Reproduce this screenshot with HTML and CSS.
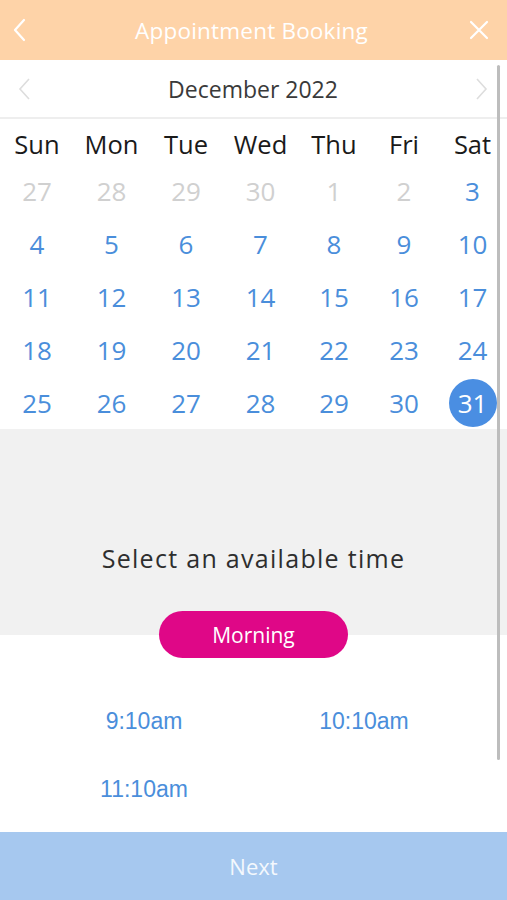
FILE: index.html
```html
<!DOCTYPE html>
<html lang="en">
<head>
    <meta charset="UTF-8">
    <meta name="viewport" content="width=device-width, initial-scale=1.0">
    <title>Appointment Booking</title>
    <link rel="stylesheet" href="styles.css">
</head>
<body>
    <div class="header">
        <svg class="hicon" width="20" height="26" viewBox="0 0 20 26"><path d="M14 3 L5 13 L14 23" fill="none" stroke="#fff" stroke-width="2.2" stroke-linecap="round" stroke-linejoin="round"/></svg>
        <h1 class="title">Appointment Booking</h1>
        <svg class="hicon" width="24" height="24" viewBox="0 0 24 24"><path d="M4 4 L20 20 M20 4 L4 20" fill="none" stroke="#fff" stroke-width="2.2" stroke-linecap="round"/></svg>
    </div>

    <div class="month">
        <svg width="16" height="24" viewBox="0 0 16 24"><path d="M12 2 L3 12 L12 22" fill="none" stroke="#ddd" stroke-width="1.6"/></svg>
        <span class="month-name">December 2022</span>
        <svg width="16" height="24" viewBox="0 0 16 24"><path d="M4 2 L13 12 L4 22" fill="none" stroke="#ddd" stroke-width="1.6"/></svg>
    </div>

    <div class="cal">
        <span class="dname">Sun</span><span class="dname">Mon</span><span class="dname">Tue</span><span class="dname">Wed</span><span class="dname">Thu</span><span class="dname">Fri</span><span class="dname">Sat</span>
        <span class="day off">27</span><span class="day off">28</span><span class="day off">29</span><span class="day off">30</span><span class="day off">1</span><span class="day off">2</span><span class="day">3</span>
        <span class="day">4</span><span class="day">5</span><span class="day">6</span><span class="day">7</span><span class="day">8</span><span class="day">9</span><span class="day">10</span>
        <span class="day">11</span><span class="day">12</span><span class="day">13</span><span class="day">14</span><span class="day">15</span><span class="day">16</span><span class="day">17</span>
        <span class="day">18</span><span class="day">19</span><span class="day">20</span><span class="day">21</span><span class="day">22</span><span class="day">23</span><span class="day">24</span>
        <span class="day">25</span><span class="day">26</span><span class="day">27</span><span class="day">28</span><span class="day">29</span><span class="day">30</span><span class="day"><span class="sel">31</span></span>
    </div>

    <div class="pick">
        <p class="pick-text">Select an available time</p>
    </div>
    <div class="period">
        <button class="morning">Morning</button>
    </div>

    <div class="times">
        <span class="slot">9:10am</span>
        <span class="slot">10:10am</span>
        <span class="slot">11:10am</span>
        <span class="slot"></span>
        <span class="slot">12:10pm</span>
        <span class="slot">12:40pm</span>
    </div>

    <div class="scrollbar"></div>
    <div class="next">Next</div>
</body>
</html>
```

FILE: styles.css
```css
* {
    margin: 0;
    padding: 0;
    box-sizing: border-box;
}

body {
    width: 507px;
    height: 900px;
    overflow: hidden;
    font-family: 'Open Sans', 'Noto Sans', sans-serif;
    background: #fff;
    position: relative;
}

.header {
    height: 60px;
    background: #fed3a8;
    display: flex;
    align-items: center;
    justify-content: space-between;
    padding: 0 16px 0 10px;
}

.hicon {
    display: block;
}

.title {
    font-weight: normal;
    font-size: 22.5px;
    color: #fff;
    letter-spacing: 0.2px;
    margin-left: 6px;
}

.month {
    height: 59px;
    border-bottom: 2px solid #eee;
    display: flex;
    align-items: center;
    justify-content: space-between;
    padding: 0 18px 0 17px;
}

.month-name {
    font-size: 23px;
    color: #3a3a3a;
}

.cal {
    display: grid;
    grid-template-columns: 74px 75px 74px 75px 72px 68px 69px;
    grid-auto-rows: 53px;
    grid-template-rows: 40px;
    padding-top: 5px;
}

.dname {
    font-size: 25.5px;
    color: #1a1a1a;
    text-align: center;
    line-height: 40px;
}

.day {
    font-size: 26px;
    color: #4a8edb;
    display: flex;
    align-items: center;
    justify-content: center;
}

.day.off {
    color: #d0d0d0;
}

.sel {
    width: 48px;
    height: 48px;
    border-radius: 50%;
    background: #4a8ee2;
    color: #fff;
    display: flex;
    align-items: center;
    justify-content: center;
}

.pick {
    background: #f1f1f1;
    height: 206px;
    padding-top: 112px;
}

.pick-text {
    text-align: center;
    font-size: 25px;
    color: #2e2e2e;
    letter-spacing: 1.3px;
}

.period {
    height: 0;
    display: flex;
    justify-content: center;
}

.morning {
    width: 189px;
    height: 47px;
    margin-top: -24px;
    border: none;
    border-radius: 24px;
    background: #df0787;
    color: #fff;
    font-family: 'Open Sans', 'Noto Sans', sans-serif;
    font-size: 21px;
}

.times {
    display: grid;
    grid-template-columns: 288px 152px;
    grid-auto-rows: 68px;
    padding-top: 69px;
}

.slot {
    font-family: 'Liberation Sans', Arial, sans-serif;
    font-size: 23px;
    color: #4a8edb;
    text-align: center;
    line-height: 34px;
    height: 34px;
}

.scrollbar {
    position: absolute;
    left: 497px;
    top: 65px;
    width: 3px;
    height: 695px;
    background: #bdbdbd;
    border-radius: 2px;
}

.next {
    position: absolute;
    left: 0;
    bottom: 0;
    width: 507px;
    height: 68px;
    background: #a6c8ef;
    color: #f4f8fd;
    font-size: 22px;
    text-align: center;
    line-height: 68px;
}
```
